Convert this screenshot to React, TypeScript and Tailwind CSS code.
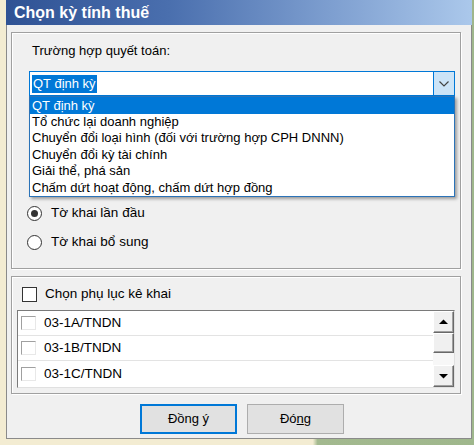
import React from "react";

const font = { fontFamily: '"Liberation Sans", Arial, sans-serif' };

function Radio({ checked, label }: { checked?: boolean; label: string }) {
  return (
    <div className="flex items-center h-[16px]">
      <div className="w-[15px] h-[15px] rounded-full border border-[#333] bg-white flex items-center justify-center">
        {checked && <div className="w-[7px] h-[7px] rounded-full bg-[#333]" />}
      </div>
      <span className="ml-[9px] text-[13.5px] leading-[16px] text-black">{label}</span>
    </div>
  );
}

function ListRow({ label, last }: { label: string; last?: boolean }) {
  return (
    <div className={"h-[25px] flex items-center bg-white " + (last ? "" : "border-b border-[#e3e3e3]")}>
      <div className="ml-[3px] w-[15px] h-[14px] border-t border-l border-[#a0a0a0] border-b border-r border-b-[#e8e8e8] border-r-[#e8e8e8] bg-white" />
      <span className="ml-[8px] text-[13.5px] leading-[16px] text-black">{label}</span>
    </div>
  );
}

function ScrollBtn({ up }: { up?: boolean }) {
  return (
    <div className="h-[22px] w-full bg-[#f0f0f0] border-t border-l border-white border-b border-r border-b-[#696969] border-r-[#696969] shadow-[inset_-1px_-1px_0_#a0a0a0] flex items-center justify-center">
      <svg width="9" height="6" viewBox="0 0 9 6">
        {up ? <polygon points="0,5 9,5 4.5,0.5" fill="#000" /> : <polygon points="0,1 9,1 4.5,5.5" fill="#000" />}
      </svg>
    </div>
  );
}

export default function App() {
  return (
    <div
      className="w-[474px] h-[445px] overflow-hidden bg-[linear-gradient(90deg,#f3ecd2_0%,#f3ecd2_66%,#a3b98f_67%,#9fb78c_100%)]"
      style={font}
    >
      <div className="ml-[6px] w-[466px] h-[439px] flex flex-col border-l border-r border-b border-[#8a8a8a] bg-[#f0f0f0]">
        {/* Title bar */}
        <div className="-ml-px -mr-px h-[25px] flex items-center bg-[linear-gradient(90deg,#2f5294_0%,#4a6fae_35%,#7e9fd0_70%,#abc8eb_100%)]">
          <span className="ml-[8px] text-white font-bold text-[16px] leading-[18px]">Chọn kỳ tính thuế</span>
        </div>

        {/* Body */}
        <div className="flex flex-col">
          {/* Group 1 */}
          <div className="mt-[7px] ml-[4px] w-[450px] h-[237px] border border-[#a0a0a0] shadow-[inset_1px_1px_0_#fff,1px_1px_0_#fff] flex flex-col">
            <div className="mt-[10px] ml-[20px] text-[13px] leading-[16px] text-black">Trường hợp quyết toán:</div>
            <div className="relative mt-[12px] ml-[17px] w-[426px] h-[25px]">
              <div className="w-full h-full border border-[#0078d7] bg-white flex items-center">
                <div className="flex-1 pl-[2px] flex items-center">
                  <span className="bg-[#0078d7] text-white text-[13px] leading-[18px] px-[1px]">QT định kỳ</span>
                </div>
                <div className="w-[21px] h-full bg-[#cce4f7] border-l border-[#0078d7] flex items-center justify-center">
                  <svg width="10" height="6" viewBox="0 0 10 6">
                    <polyline points="0.5,0.5 5,5 9.5,0.5" fill="none" stroke="#444" strokeWidth="1.2" />
                  </svg>
                </div>
              </div>
              {/* Dropdown list */}
              <div className="absolute left-0 top-[25px] w-[426px] h-[101px] border border-[#2b73b8] bg-white shadow-[2px_2px_3px_rgba(0,0,0,0.35)] z-10 flex flex-col">
                <div className="h-[17px] bg-[#0078d7] text-white text-[13px] leading-[17px] pl-[2px]">QT định kỳ</div>
                <div className="h-[16.4px] text-black text-[13px] leading-[16.4px] pl-[2px]">Tổ chức lại doanh nghiệp</div>
                <div className="h-[16.4px] text-black text-[13px] leading-[16.4px] pl-[2px]">Chuyển đổi loại hình (đối với trường hợp CPH DNNN)</div>
                <div className="h-[16.4px] text-black text-[13px] leading-[16.4px] pl-[2px]">Chuyển đổi kỳ tài chính</div>
                <div className="h-[16.4px] text-black text-[13px] leading-[16.4px] pl-[2px]">Giải thể, phá sản</div>
                <div className="h-[16.4px] text-black text-[13px] leading-[16.4px] pl-[2px]">Chấm dứt hoạt động, chấm dứt hợp đồng</div>
              </div>
            </div>
            <div className="mt-[109px] ml-[15px] flex flex-col gap-[13px]">
              <Radio checked label="Tờ khai lần đầu" />
              <Radio label="Tờ khai bổ sung" />
            </div>
          </div>

          {/* Group 2 */}
          <div className="mt-[7px] ml-[4px] w-[450px] h-[118px] border border-[#a0a0a0] shadow-[inset_1px_1px_0_#fff,1px_1px_0_#fff] flex flex-col">
            <div className="mt-[10px] ml-[10px] flex items-center h-[14px]">
              <div className="w-[15px] h-[15px] border border-[#333] bg-white" />
              <span className="ml-[8px] text-[13.5px] leading-[16px] text-black">Chọn phụ lục kê khai</span>
            </div>
            <div className="mt-[9px] ml-[5px] w-[438px] h-[78px] border-t border-l border-[#7a7a7a] border-b border-r border-b-[#e0e0e0] border-r-[#e0e0e0] bg-white flex">
              <div className="flex-1 flex flex-col">
                <ListRow label="03-1A/TNDN" />
                <ListRow label="03-1B/TNDN" />
                <ListRow label="03-1C/TNDN" last />
              </div>
              <div className="w-[21px] flex flex-col bg-[#f3f3f3]">
                <ScrollBtn up />
                <div className="h-[20px] w-full bg-[#f0f0f0] border-t border-l border-white border-b border-r border-b-[#696969] border-r-[#696969] shadow-[inset_-1px_-1px_0_#a0a0a0]" />
                <div className="flex-1 bg-[#f7f7f7]" />
                <ScrollBtn />
              </div>
            </div>
          </div>

          {/* Buttons */}
          <div className="mt-[10px] flex justify-center gap-[10px] pl-[6px]">
            <button className="w-[97px] h-[30px] bg-[#e1e1e1] border-2 border-[#0078d7] text-[13px] text-black leading-[16px]">
              Đồn<span className="underline">g</span> ý
            </button>
            <button className="w-[97px] h-[30px] bg-[#e1e1e1] border border-[#adadad] text-[13px] text-black leading-[16px]">
              Đó<span className="underline">n</span>g
            </button>
          </div>
        </div>
      </div>
    </div>
  );
}
